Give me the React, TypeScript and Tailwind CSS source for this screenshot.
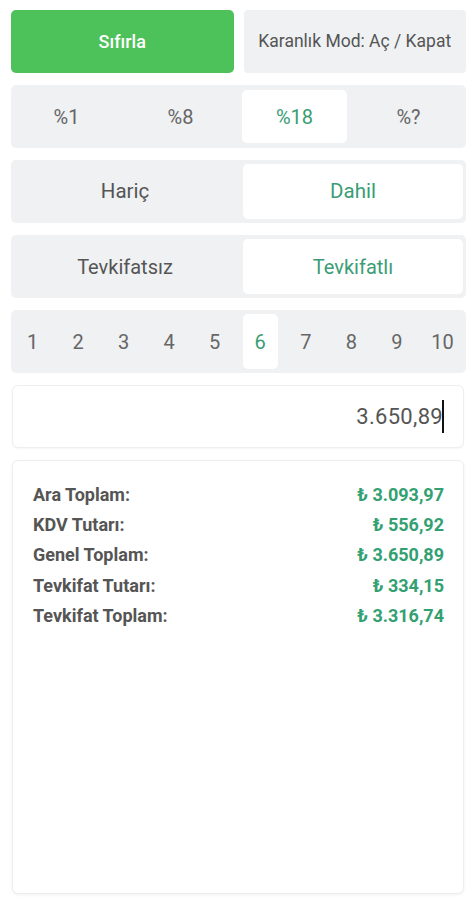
import React from "react";

const font = { fontFamily: "Roboto, 'Noto Sans', sans-serif" };

export default function App() {
  const nums = ["1", "2", "3", "4", "5", "6", "7", "8", "9", "10"];
  const rows: [string, string][] = [
    ["Ara Toplam:", "₺ 3.093,97"],
    ["KDV Tutarı:", "₺ 556,92"],
    ["Genel Toplam:", "₺ 3.650,89"],
    ["Tevkifat Tutarı:", "₺ 334,15"],
    ["Tevkifat Toplam:", "₺ 3.316,74"],
  ];
  return (
    <div className="w-[476px] h-[900px] bg-white flex flex-col gap-3 pt-[10px] pl-[11px] pr-[10px] overflow-hidden" style={font}>
      <div className="flex gap-[10px] h-[63px]">
        <div className="flex-1 rounded-[5px] bg-[#4dc15a] flex items-center justify-center text-white text-[18px] font-medium">
          Sıfırla
        </div>
        <div className="flex-1 rounded-[4px] bg-[#eff1f3] flex items-center justify-center text-[#555] text-[17.5px]">
          Karanlık Mod: Aç / Kapat
        </div>
      </div>

      <div className="h-[63px] rounded-[5px] bg-[#eff1f3] flex items-stretch justify-between py-[5px] pl-[3px] pr-[5px]">
        {["%1", "%8", "%18", "%?"].map((t) => (
          <div
            key={t}
            className={
              "w-[105px] flex items-center justify-center text-[20px] rounded-[5px] " +
              (t === "%18" ? "bg-white text-[#3a9d75]" : "text-[#666]")
            }
          >
            {t}
          </div>
        ))}
      </div>

      <div className="h-[63px] rounded-[5px] bg-[#eff1f3] flex items-stretch gap-[8px] p-[4px] pr-[3px]">
        <div className="flex-1 flex items-center justify-center text-[20.5px] text-[#555]">Hariç</div>
        <div className="flex-1 flex items-center justify-center text-[20.5px] text-[#3a9d75] bg-white rounded-[5px]">Dahil</div>
      </div>

      <div className="h-[63px] rounded-[5px] bg-[#eff1f3] flex items-stretch gap-[8px] p-[4px] pr-[3px]">
        <div className="flex-1 flex items-center justify-center text-[20px] text-[#555]">Tevkifatsız</div>
        <div className="flex-1 flex items-center justify-center text-[20px] text-[#3a9d75] bg-white rounded-[5px]">Tevkifatlı</div>
      </div>

      <div className="h-[63px] rounded-[5px] bg-[#eff1f3] flex items-stretch justify-between py-[4px] pl-[4px] pr-[6px]">
        {nums.map((n) => (
          <div
            key={n}
            className={
              "w-[35px] flex items-center justify-center text-[20px] rounded-[5px] " +
              (n === "6" ? "bg-white text-[#3a9d75]" : "text-[#666]")
            }
          >
            {n}
          </div>
        ))}
      </div>

      <div className="h-[63px] mr-[2px] ml-[1px] rounded-[6px] border border-[#eceeef] bg-white flex items-center justify-end pr-[19px] shadow-[0_1px_2px_rgba(0,0,0,0.04)]">
        <span className="text-[22px] text-[#555] tracking-[0.3px]">3.650,89</span>
        <span className="w-[2px] h-[33px] bg-[#111] -ml-[1px]" />
      </div>

      <div className="h-[434px] mr-[2px] ml-[1px] rounded-[6px] border border-[#eceeef] bg-white shadow-[0_1px_3px_rgba(0,0,0,0.06)] pt-[18px] pl-[20px] pr-[19px] flex flex-col">
        {rows.map(([l, v]) => (
          <div key={l} className="h-[30.3px] flex items-center justify-between text-[18px] font-bold">
            <span className="text-[#555]">{l}</span>
            <span className="text-[#33a072]">{v}</span>
          </div>
        ))}
      </div>
    </div>
  );
}
